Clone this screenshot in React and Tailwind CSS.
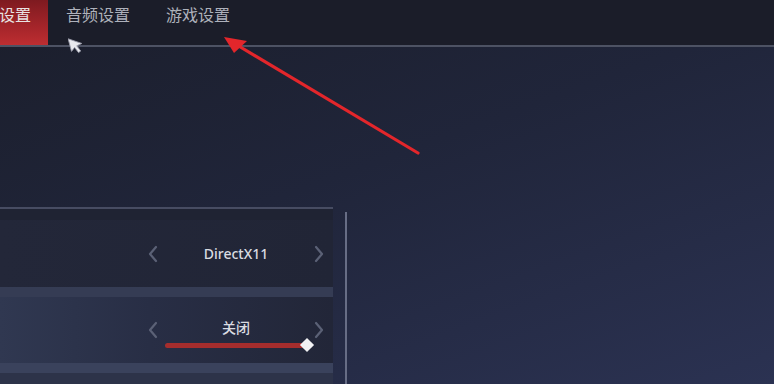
import React from "react";

function ChevronLeft() {
  return (
    <svg width="12" height="18" viewBox="0 0 12 18" fill="none">
      <path d="M9 2 L3 9 L9 16" stroke="#5b6176" strokeWidth="2.2" strokeLinecap="round" strokeLinejoin="round" />
    </svg>
  );
}
function ChevronRight() {
  return (
    <svg width="12" height="18" viewBox="0 0 12 18" fill="none">
      <path d="M3 2 L9 9 L3 16" stroke="#5b6176" strokeWidth="2.2" strokeLinecap="round" strokeLinejoin="round" />
    </svg>
  );
}

export default function App() {
  const font = { fontFamily: '"Noto Sans", "Noto Sans CJK SC", sans-serif' };
  return (
    <div
      className="relative w-[774px] h-[384px] overflow-hidden bg-[linear-gradient(160deg,#1b1e2b_0%,#20253a_45%,#2b3252_100%)]"
      style={font}
    >
      {/* header */}
      <div className="flex h-[47px] bg-[#1b1d29] border-b-2 border-[#4d5263]">
        <div className="flex w-[48px] h-full justify-end overflow-hidden bg-[linear-gradient(180deg,#7e1a20_0%,#a5252a_60%,#bd2e31_100%)] pr-[17px] pt-[5px]">
          <span className="whitespace-nowrap text-[16px] leading-[20px] text-[#e9e3e3]">画面设置</span>
        </div>
        <div className="px-[18px] pt-[5px] text-[16px] leading-[20px] text-[#aeb1bb]">音频设置</div>
        <div className="px-[18px] pt-[5px] text-[16px] leading-[20px] text-[#aeb1bb]">游戏设置</div>
      </div>

      {/* body */}
      <div className="flex pt-[160px]">
        <div className="w-[333px] flex flex-col">
          <div className="h-[2px] bg-[#474c62]" />
          <div className="h-[11px] bg-[#1f2333]" />
          <div className="h-[67px] flex items-center bg-[linear-gradient(90deg,#232739_0%,#212536_100%)]">
            <div className="ml-[147px] flex items-center">
              <ChevronLeft />
            </div>
            <div className="w-[154px] text-center text-[14px] font-medium text-[#d9dbe1]">DirectX11</div>
            <ChevronRight />
          </div>
          <div className="h-[10px] bg-[#353c54]" />
          <div className="h-[66px] relative flex items-start bg-[linear-gradient(90deg,#303851_0%,#282e45_45%,#222638_100%)]">
            <div className="ml-[147px] mt-[24px] flex items-center">
              <ChevronLeft />
            </div>
            <div className="w-[154px] flex flex-col items-center mt-[21px]">
              <span className="text-[14px] font-medium leading-[20px] text-[#d9dbe1]">关闭</span>
              <div className="relative mt-[5px] mr-[2px] w-[140px] h-[5px] rounded-full bg-[#a52d2d]">
                <div className="absolute right-[-7px] top-[-3px] w-[10px] h-[10px] rotate-45 bg-[#f2f2f4]" />
              </div>
            </div>
            <div className="mt-[24px]">
              <ChevronRight />
            </div>
          </div>
          <div className="h-[10px] bg-[#3a425c]" />
          <div className="h-[20px] bg-[#2d3349]" />
        </div>
        <div className="ml-[12px] mt-[5px] w-[2px] h-[200px] bg-[#676d85]" />
      </div>

      {/* cursor overlay */}
      <svg className="absolute left-[68px] top-[36px]" width="16" height="18" viewBox="0 0 16 18">
        <path d="M2 1 L14 9 L8.5 10 L11 16 L8.5 17 L6 11 L2 14 Z" fill="#e8e9ee" stroke="#9a9caa" strokeWidth="0.8" transform="rotate(-15 8 9)" />
      </svg>

      {/* red arrow overlay */}
      <svg className="absolute left-0 top-0" width="774" height="384" viewBox="0 0 774 384">
        <path d="M418 153 L237 45" stroke="#e3262b" strokeWidth="3.2" strokeLinecap="round" />
        <path d="M224 37 L247 41 L234 53 Z" fill="#e3262b" />
      </svg>
    </div>
  );
}
